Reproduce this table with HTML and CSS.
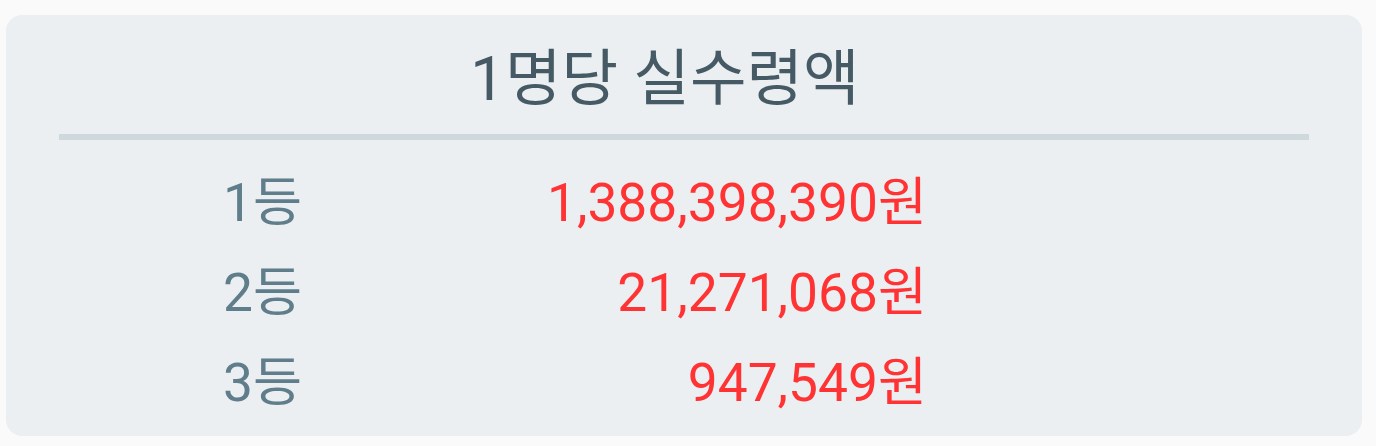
FILE: index.html
```html
<!DOCTYPE html>
<html lang="ko">
<head>
<meta charset="utf-8">
<link rel="stylesheet" href="styles.css">
</head>
<body>
<div class="card">
  <div class="title">1명당 실수령액</div>
  <div class="divider"></div>
  <div class="rows">
    <div class="label">1등</div><div class="value">1,388,398,390원</div>
    <div class="label">2등</div><div class="value">21,271,068원</div>
    <div class="label">3등</div><div class="value">947,549원</div>
  </div>
</div>
</body>
</html>
```
FILE: styles.css
```css
html, body {
  margin: 0;
  padding: 0;
  background: #fafafa;
}
body {
  padding: 15px 14px 10px 6px;
  font-family: Roboto, "Noto Sans CJK KR", sans-serif;
}
.card {
  background: #eceff1;
  border-radius: 16px;
  padding: 24px 0 8px;
  height: 421px;
  box-sizing: border-box;
}
.title {
  font-size: 61.5px;
  line-height: 80px;
  color: #455a64;
  text-align: center;
  padding-right: 38px;
}
.divider {
  height: 6px;
  margin: 15px 53px 0;
  background: #cfd8dc;
}
.rows {
  display: grid;
  grid-template-columns: 296px 625px;
  margin-top: 18px;
  font-size: 53.3px;
  line-height: 90px;
}
.label {
  text-align: right;
  color: #607d8b;
}
.value {
  text-align: right;
  color: #ff3333;
}
```
